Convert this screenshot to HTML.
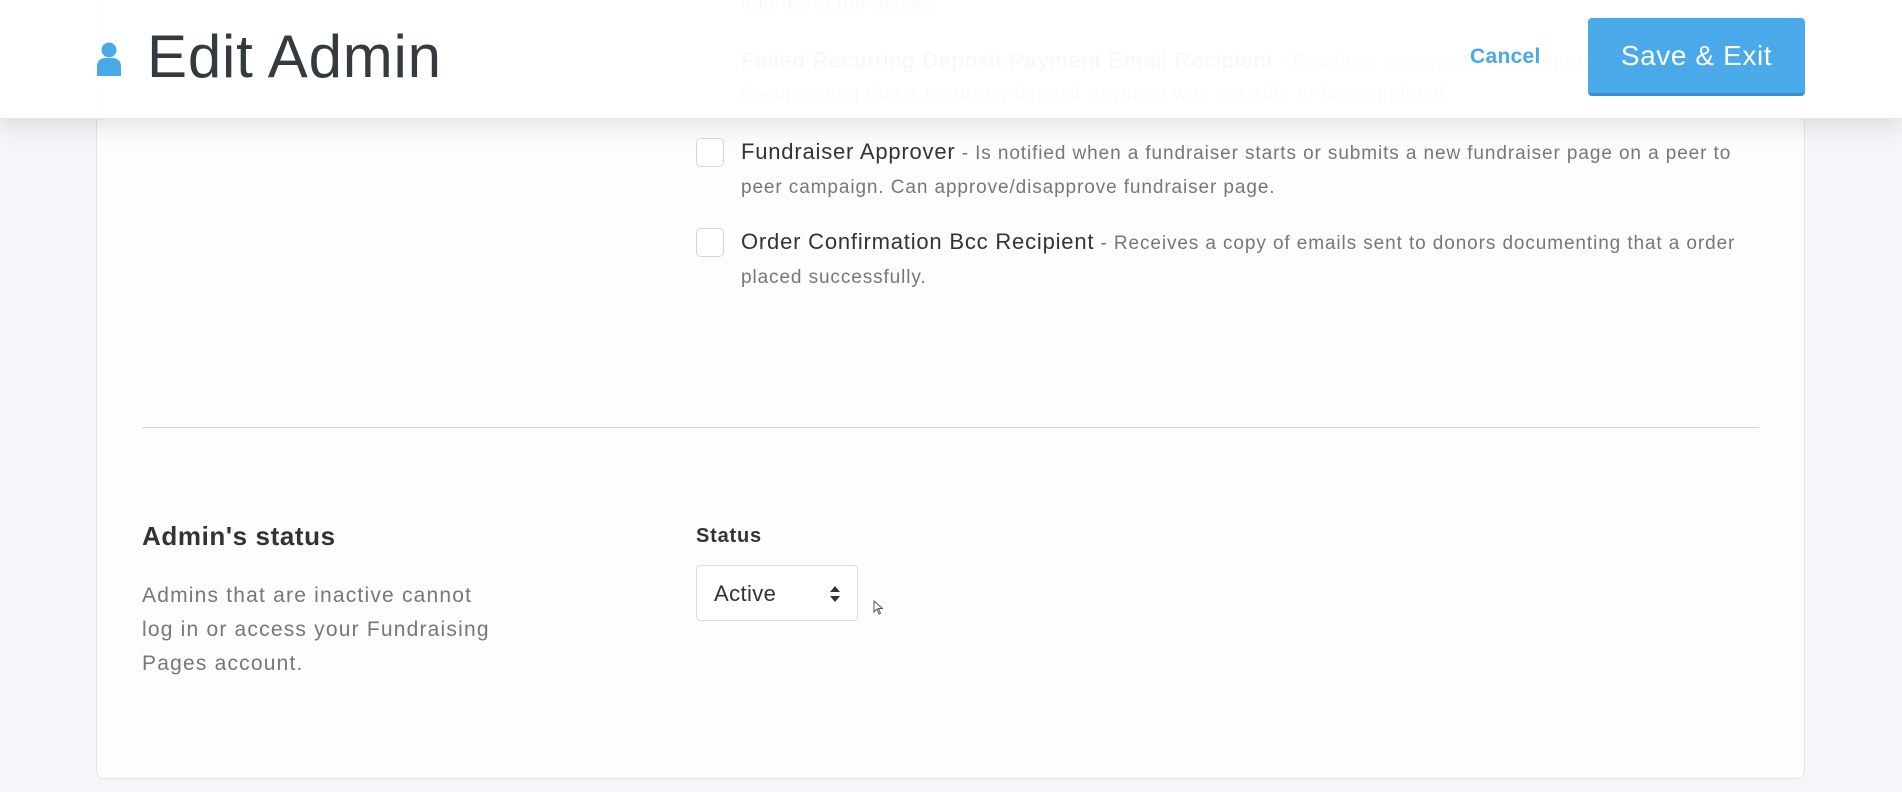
<!DOCTYPE html>
<html><head><meta charset="utf-8"><style>
*{margin:0;padding:0;box-sizing:border-box}
body{width:1902px;height:792px;overflow:hidden;background:#f5f6fa;font-family:"Liberation Sans",sans-serif;position:relative}
.card{position:absolute;left:96px;top:-10px;width:1709px;height:789px;background:#fdfdfd;border:1px solid #e3e5ea;border-radius:8px}
.a{position:absolute;white-space:nowrap}
.cb{position:absolute;width:28px;height:29px;border:1px solid #d4d6da;border-radius:5px;background:#fff}
.t{font-size:22px;color:#333;letter-spacing:0.8px}
.d{font-size:19px;color:#777;letter-spacing:0.9px}
.hdr{position:absolute;left:0;top:0;width:1902px;height:119px;background:rgba(255,255,255,0.96);box-shadow:0 6px 24px rgba(0,0,0,0.12);border-bottom:1px solid #e6e6e6}
</style></head><body>
<div class="card"></div>
<div class="a" style="left:143px;top:0;width:369px;height:21px;border:1px solid #e8eef2;border-top:none;border-radius:0 0 4px 4px;background:#f8fbfd"></div>
<div class="a d" style="left:741px;top:-7px">and ticket purchases.</div>
<div class="a" style="left:741px;top:48px"><span class="t">Failed Recurring Deposit Payment Email Recipient</span><span class="d"> - Receives a copy of email sent to donors</span></div>
<div class="a d" style="left:741px;top:84px">documenting that a recurring deposit payment was not able to be completed.</div>

<div class="hdr">
 <svg class="a" style="left:96px;top:42px" width="26" height="34" viewBox="0 0 26 34"><circle cx="13" cy="8" r="7.5" fill="#4aa9e9"/><path d="M1 34V24c0-5 4-8 8-8h8c4 0 8 3 8 8v10z" fill="#4aa9e9"/></svg>
 <div class="a" style="left:147px;top:22px;font-size:60px;color:#333a40;letter-spacing:0.8px">Edit Admin</div>
 <div class="a" style="left:1470px;top:45px;font-size:21px;font-weight:bold;color:#4aa9e9;letter-spacing:0.3px">Cancel</div>
 <div class="a" style="left:1588px;top:18px;width:217px;height:78px;background:#4aa9e9;border-radius:4px;border-bottom:3px solid #3b8fcc;color:#fff;font-size:28px;letter-spacing:0.6px;text-align:center;line-height:76px">Save &amp; Exit</div>
</div>

<div class="cb" style="left:696px;top:138px"></div>
<div class="a" style="left:741px;top:139px"><span class="t">Fundraiser Approver</span><span class="d"> - Is notified when a fundraiser starts or submits a new fundraiser page on a peer to</span></div>
<div class="a d" style="left:741px;top:177px">peer campaign. Can approve/disapprove fundraiser page.</div>
<div class="cb" style="left:696px;top:228px"></div>
<div class="a" style="left:741px;top:229px"><span class="t">Order Confirmation Bcc Recipient</span><span class="d"> - Receives a copy of emails sent to donors documenting that a order</span></div>
<div class="a d" style="left:741px;top:267px">placed successfully.</div>

<div class="a" style="left:142px;top:427px;width:1617px;height:1px;background:#d6d6d6"></div>

<div class="a" style="left:142px;top:521px;font-size:26px;color:#333;font-weight:bold;letter-spacing:0.6px">Admin's status</div>
<div class="a" style="left:142px;top:579px;font-size:21px;color:#777;line-height:34px;letter-spacing:1.2px">Admins that are inactive cannot<br>log in or access your Fundraising<br>Pages account.</div>
<div class="a" style="left:696px;top:525px;font-size:20px;color:#333;font-weight:bold;letter-spacing:0.8px">Status</div>
<div class="a" style="left:696px;top:565px;width:162px;height:56px;border:1px solid #d9dbde;border-radius:4px;background:#fff">
 <div class="a" style="left:17px;top:15px;font-size:22px;color:#333;letter-spacing:0.4px">Active</div>
 <svg class="a" style="left:133px;top:20px" width="10" height="16" viewBox="0 0 10 16"><path d="M5 0L10 6H0z M5 16L10 10H0z" fill="#333"/></svg>
</div>
<svg class="a" style="left:873px;top:600px" width="10" height="15" viewBox="0 0 10 15"><path d="M1 1V12L4 9L6 14L7.5 13.3L5.5 8.5H9.5Z" fill="#fff" stroke="#555" stroke-width="1"/></svg>
</body></html>
